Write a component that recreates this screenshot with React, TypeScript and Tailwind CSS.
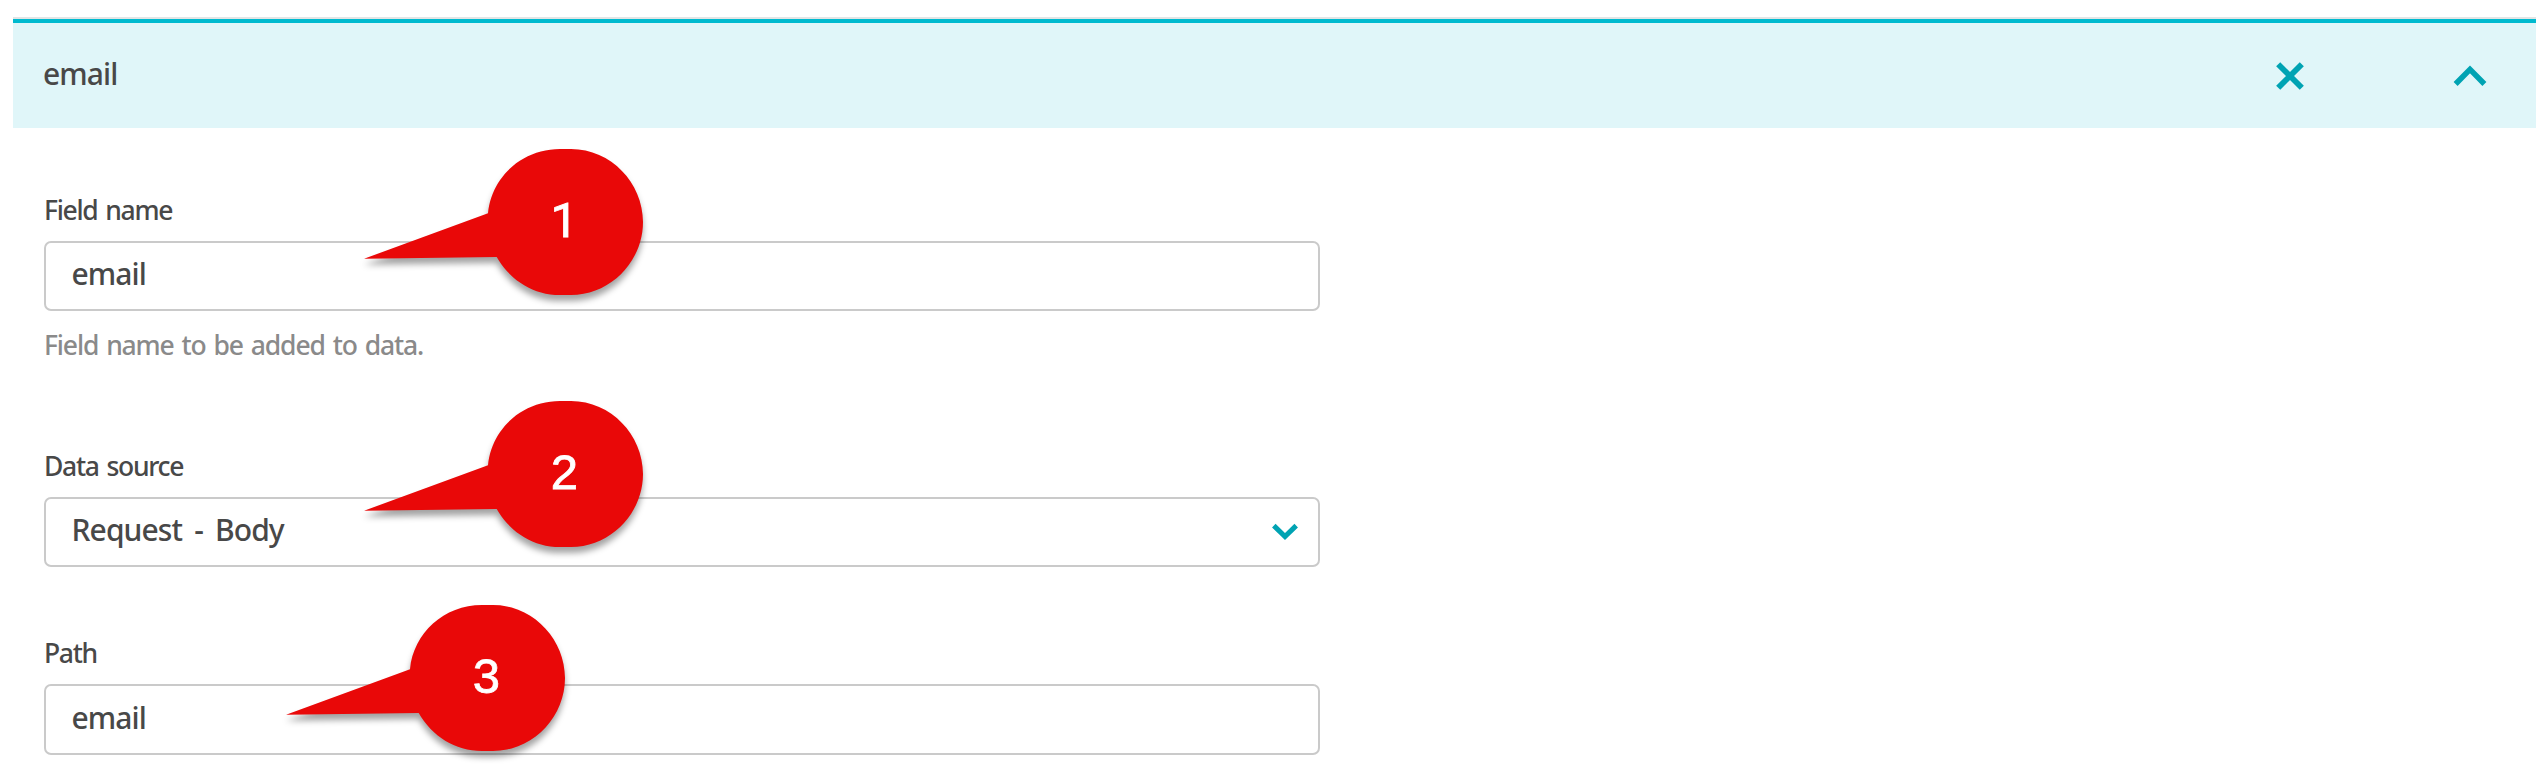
import type { ReactNode } from "react";

function Callout({ n, className, font = "font-['Liberation_Sans',sans-serif]" }: { n: number; className: string; font?: string }) {
  return (
    <svg className={`absolute overflow-visible ${className}`} width="280" height="147" viewBox="0 0 280 147">
      <path
        className="drop-shadow-[0_6px_3px_rgba(0,0,0,0.36)]"
        fill="#e90808"
        d="M0 109.7 L124 64.3 C127.5 28 158 0 196 0 H207 C247 0 279 34 279 73 C279 112 247 146 207 146 H196 C169 146 146 131 132.7 108 Z"
      />
      <text x="200.3" y="88" textAnchor="middle" fill="#fff" stroke="#fff" strokeWidth="0.8" className={`text-[49px] ${font}`}>
        {n}
      </text>
    </svg>
  );
}

function Label({ children }: { children: ReactNode }) {
  return <label className="block h-9 text-[26.5px] leading-9 font-medium tracking-[-1.3px] [word-spacing:2.2px]">{children}</label>;
}

function Value({ children }: { children: ReactNode }) {
  return <span className="text-[30px] leading-9 font-medium tracking-[-0.9px] [word-spacing:5.2px]">{children}</span>;
}

function Box({ value, className, children }: { value: string; className: string; children?: ReactNode }) {
  return (
    <div className={`flex w-[1276px] justify-between rounded-[7px] border-2 border-[#cacaca] bg-white pr-[20px] pl-[25.5px] ${className}`}>
      <Value>{value}</Value>
      {children}
    </div>
  );
}

export default function App() {
  return (
    <div className="relative h-[768px] w-[2538px] overflow-hidden bg-white pt-[17px] pr-[2px] pl-[13px] font-['Noto_Sans',sans-serif] text-[#484848]">
      <div className="border-t-2 border-[#e2e5e5]">
        <header className="flex h-[109px] items-center justify-between border-t-4 border-[#00bacf] bg-[#e0f6f9] pr-[48px] pl-[30px]">
          <div className="pb-[3px]">
            <Value>email</Value>
          </div>
          <div className="flex items-center gap-[144px]">
            <svg width="36" height="36" viewBox="-18 -18 36 36" fill="none" stroke="#00a3b3" strokeWidth="5.8">
              <path d="M-11.8 -11.8 L11.8 11.8 M11.8 -11.8 L-11.8 11.8" />
            </svg>
            <svg width="36" height="36" viewBox="-18 -18 36 36" fill="none" stroke="#00a3b3" strokeWidth="5.6">
              <path d="M-14.4 8 L0 -6.6 L14.4 8" />
            </svg>
          </div>
        </header>
      </div>
      <main className="pt-[64px] pl-[31px]">
        <section className="h-[256px]">
          <Label>Field name</Label>
          <Box value="email" className="mt-[13px] h-[70px] pt-[13px]" />
          <p className="mt-[16px] text-[26.5px] leading-9 font-medium tracking-[-1.15px] text-[#8a8a8a] [word-spacing:2.2px]">
            Field name to be added to data.
          </p>
        </section>
        <section className="h-[187px]">
          <Label>Data source</Label>
          <Box value="Request - Body" className="mt-[13px] h-[70px] pt-[13px]">
            <svg className="mt-[11px]" width="26" height="18" viewBox="-13 -9 26 18" fill="none" stroke="#00a3b3" strokeWidth="5">
              <path d="M-11.2 -6.4 L0 4.6 L11.2 -6.4" />
            </svg>
          </Box>
        </section>
        <section>
          <Label>Path</Label>
          <Box value="email" className="mt-[13px] h-[71px] pt-[14px]" />
        </section>
      </main>
      <Callout n={1} className="top-[149px] left-[363.5px]" font="font-[Roboto,sans-serif]" />
      <Callout n={2} className="top-[401px] left-[363.5px]" />
      <Callout n={3} className="top-[605px] left-[285.5px]" />
    </div>
  );
}
